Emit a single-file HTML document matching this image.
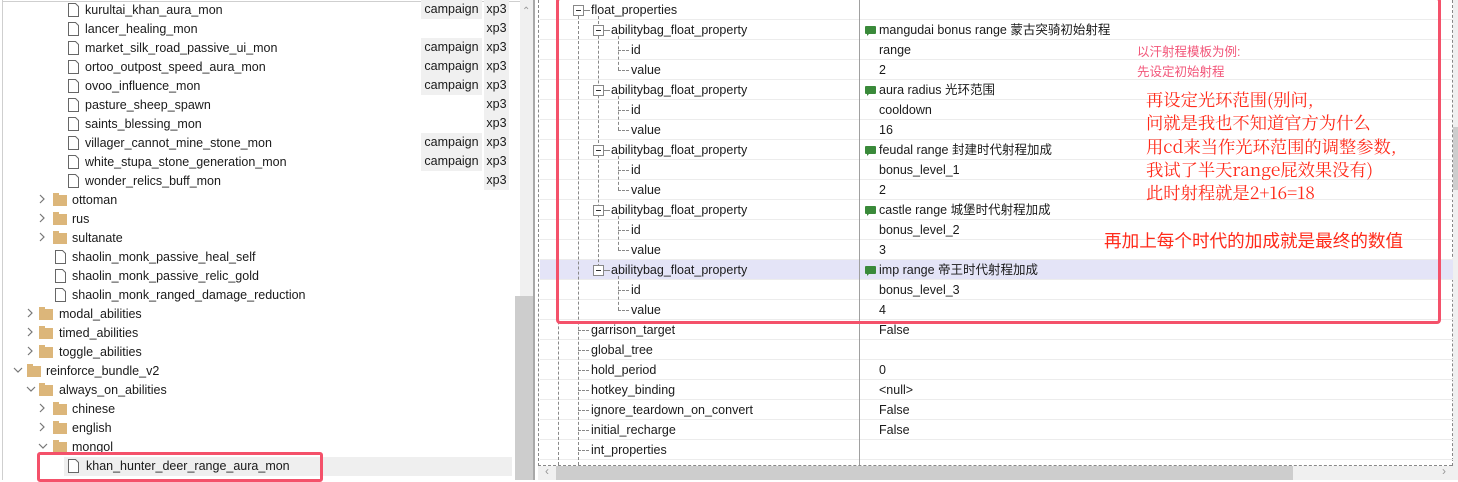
<!DOCTYPE html>
<html><head><meta charset="utf-8"><style>
*{margin:0;padding:0;box-sizing:border-box}
body{width:1458px;height:480px;overflow:hidden;background:#fff;position:relative;font-family:"Liberation Sans","Noto Sans CJK SC",sans-serif;font-size:12.5px;color:#1a1a1a}
.a{position:absolute;white-space:nowrap}
.t{position:absolute;white-space:nowrap;line-height:19px;height:19px;top:1px}
.r{position:absolute;white-space:nowrap;line-height:20px;height:20px}
.tag{position:absolute;background:#f0f0f0;height:19px;line-height:19px;text-align:center}
.fold{position:absolute;width:14px;height:11px;background:#dcb67a}
.fold:before{content:"";position:absolute;left:0;top:-2px;width:6px;height:2px;background:#dcb67a}
.hl{position:absolute;left:540px;width:913px;height:1px;background:#ececec}
.vd{position:absolute;width:0;border-left:1px dashed #888}
.hd{position:absolute;height:0;border-top:1px dashed #888}
.box{position:absolute;width:11px;height:11px;border:1px solid #888;background:#fff}
.box:after{content:"";position:absolute;left:2px;top:4px;width:5px;height:1px;background:#333}
.ic{position:absolute;width:11px;height:8px;background:#3a8a3a;border-radius:1px}
.ic:after{content:"";position:absolute;left:2px;top:7px;border-left:3px solid #3a8a3a;border-bottom:3px solid transparent}
</style></head><body>
<div class="a" style="left:2px;top:0;width:1px;height:480px;background:#cfcfcf"></div>
<div class="a" style="left:2px;top:1px;width:530px;height:1px;background:#cfcfcf"></div>
<div class="a" style="left:520px;top:0;width:13px;height:480px;background:#f0f0f0"></div>
<div class="a" style="left:515px;top:296px;width:18px;height:184px;background:#cdcdcd"></div>
<div class="a" style="left:522px;top:6px;color:#999;font-size:10px">&#8963;</div>
<div class="a" style="left:533px;top:0;width:2px;height:480px;background:#a8a8a8"></div>
<div class="a" style="left:64px;top:457px;width:448px;height:19px;background:#efefef"></div>
<svg class="a" style="left:0;top:0" width="520" height="480">
<g fill="#fff" stroke="#666" stroke-width="1">
<path d="M68.5 3.5h7l3 3v10h-10z"/><path d="M68.5 22.5h7l3 3v10h-10z"/><path d="M68.5 41.5h7l3 3v10h-10z"/><path d="M68.5 60.5h7l3 3v10h-10z"/><path d="M68.5 79.5h7l3 3v10h-10z"/><path d="M68.5 98.5h7l3 3v10h-10z"/><path d="M68.5 117.5h7l3 3v10h-10z"/><path d="M68.5 136.5h7l3 3v10h-10z"/><path d="M68.5 155.5h7l3 3v10h-10z"/><path d="M68.5 174.5h7l3 3v10h-10z"/>
<path d="M55.5 250.5h7l3 3v10h-10z"/><path d="M55.5 269.5h7l3 3v10h-10z"/><path d="M55.5 288.5h7l3 3v10h-10z"/>
<path d="M68.5 459.5h7l3 3v10h-10z"/>
</g>
<g fill="none" stroke="#777" stroke-width="1.2">
<path d="M40 195l4 4-4 4M40 214l4 4-4 4M40 233l4 4-4 4"/>
<path d="M28 309l4 4-4 4M28 328l4 4-4 4M28 347l4 4-4 4"/>
<path d="M14 368l4 4 4-4M27 387l4 4 4-4"/>
<path d="M40 404l4 4-4 4M40 423l4 4-4 4M39 444l4 4 4-4"/>
</g></svg>
<div class="fold" style="left:53px;top:195px"></div><div class="fold" style="left:53px;top:214px"></div><div class="fold" style="left:53px;top:233px"></div>
<div class="fold" style="left:39px;top:309px"></div><div class="fold" style="left:39px;top:328px"></div><div class="fold" style="left:39px;top:347px"></div>
<div class="fold" style="left:27px;top:366px"></div><div class="fold" style="left:39px;top:385px"></div>
<div class="fold" style="left:53px;top:404px"></div><div class="fold" style="left:53px;top:423px"></div><div class="fold" style="left:53px;top:442px"></div>
<div class="t" style="left:85px;top:1px">kurultai_khan_aura_mon</div>
<div class="t" style="left:85px;top:20px">lancer_healing_mon</div>
<div class="t" style="left:85px;top:39px">market_silk_road_passive_ui_mon</div>
<div class="t" style="left:85px;top:58px">ortoo_outpost_speed_aura_mon</div>
<div class="t" style="left:85px;top:77px">ovoo_influence_mon</div>
<div class="t" style="left:85px;top:96px">pasture_sheep_spawn</div>
<div class="t" style="left:85px;top:115px">saints_blessing_mon</div>
<div class="t" style="left:85px;top:134px">villager_cannot_mine_stone_mon</div>
<div class="t" style="left:85px;top:153px">white_stupa_stone_generation_mon</div>
<div class="t" style="left:85px;top:172px">wonder_relics_buff_mon</div>
<div class="tag" style="left:421px;top:0;width:61px">campaign</div><div class="tag" style="left:484px;top:0;width:25px">xp3</div>
<div class="tag" style="left:484px;top:19px;width:25px">xp3</div>
<div class="tag" style="left:421px;top:38px;width:61px">campaign</div><div class="tag" style="left:484px;top:38px;width:25px">xp3</div>
<div class="tag" style="left:421px;top:57px;width:61px">campaign</div><div class="tag" style="left:484px;top:57px;width:25px">xp3</div>
<div class="tag" style="left:421px;top:76px;width:61px">campaign</div><div class="tag" style="left:484px;top:76px;width:25px">xp3</div>
<div class="tag" style="left:484px;top:95px;width:25px">xp3</div>
<div class="tag" style="left:484px;top:114px;width:25px">xp3</div>
<div class="tag" style="left:421px;top:133px;width:61px">campaign</div><div class="tag" style="left:484px;top:133px;width:25px">xp3</div>
<div class="tag" style="left:421px;top:152px;width:61px">campaign</div><div class="tag" style="left:484px;top:152px;width:25px">xp3</div>
<div class="tag" style="left:484px;top:171px;width:25px">xp3</div>
<div class="t" style="left:72px;top:191px">ottoman</div>
<div class="t" style="left:72px;top:210px">rus</div>
<div class="t" style="left:72px;top:229px">sultanate</div>
<div class="t" style="left:72px;top:248px">shaolin_monk_passive_heal_self</div>
<div class="t" style="left:72px;top:267px">shaolin_monk_passive_relic_gold</div>
<div class="t" style="left:72px;top:286px">shaolin_monk_ranged_damage_reduction</div>
<div class="t" style="left:59px;top:305px">modal_abilities</div>
<div class="t" style="left:59px;top:324px">timed_abilities</div>
<div class="t" style="left:59px;top:343px">toggle_abilities</div>
<div class="t" style="left:46px;top:362px">reinforce_bundle_v2</div>
<div class="t" style="left:59px;top:381px">always_on_abilities</div>
<div class="t" style="left:72px;top:400px">chinese</div>
<div class="t" style="left:72px;top:419px">english</div>
<div class="t" style="left:72px;top:438px">mongol</div>
<div class="t" style="left:86px;top:457px">khan_hunter_deer_range_aura_mon</div>
<div class="a" style="left:37px;top:452px;width:286px;height:30px;border:3px solid #f4516a;border-radius:3px"></div>

<div class="a" style="left:538px;top:0;width:0;height:466px;border-left:1px dashed #888"></div>
<div class="a" style="left:538px;top:465px;width:914px;height:0;border-top:1px dashed #888"></div>
<div class="a" style="left:1452px;top:0;width:0;height:466px;border-left:1px dashed #888"></div>
<div class="a" style="left:540px;top:260px;width:913px;height:20px;background:#e4e4f7"></div>
<div class="hl" style="top:19px"></div><div class="hl" style="top:39px"></div><div class="hl" style="top:59px"></div><div class="hl" style="top:79px"></div><div class="hl" style="top:99px"></div><div class="hl" style="top:119px"></div><div class="hl" style="top:139px"></div><div class="hl" style="top:159px"></div><div class="hl" style="top:179px"></div><div class="hl" style="top:199px"></div><div class="hl" style="top:219px"></div><div class="hl" style="top:239px"></div><div class="hl" style="top:259px"></div><div class="hl" style="top:279px"></div><div class="hl" style="top:299px"></div><div class="hl" style="top:319px"></div><div class="hl" style="top:339px"></div><div class="hl" style="top:359px"></div><div class="hl" style="top:379px"></div><div class="hl" style="top:399px"></div><div class="hl" style="top:419px"></div><div class="hl" style="top:439px"></div><div class="hl" style="top:459px"></div>
<div class="a" style="left:859px;top:0;width:1px;height:465px;background:#a0a0a0"></div>
<div class="vd" style="left:558px;top:0;height:465px"></div>
<div class="vd" style="left:578px;top:16px;height:449px"></div>
<div class="vd" style="left:598px;top:16px;height:256px"></div>
<div class="hd" style="left:584px;top:10px;width:6px"></div>
<div class="vd" style="left:618px;top:36px;height:34px"></div>
<div class="vd" style="left:618px;top:96px;height:34px"></div>
<div class="vd" style="left:618px;top:156px;height:34px"></div>
<div class="vd" style="left:618px;top:216px;height:34px"></div>
<div class="vd" style="left:618px;top:276px;height:34px"></div>
<div class="hd" style="left:618px;top:50px;width:11px"></div><div class="hd" style="left:618px;top:70px;width:11px"></div>
<div class="hd" style="left:618px;top:110px;width:11px"></div><div class="hd" style="left:618px;top:130px;width:11px"></div>
<div class="hd" style="left:618px;top:170px;width:11px"></div><div class="hd" style="left:618px;top:190px;width:11px"></div>
<div class="hd" style="left:618px;top:230px;width:11px"></div><div class="hd" style="left:618px;top:250px;width:11px"></div>
<div class="hd" style="left:618px;top:290px;width:11px"></div><div class="hd" style="left:618px;top:310px;width:11px"></div>
<div class="hd" style="left:604px;top:30px;width:6px"></div><div class="hd" style="left:604px;top:90px;width:6px"></div><div class="hd" style="left:604px;top:150px;width:6px"></div><div class="hd" style="left:604px;top:210px;width:6px"></div><div class="hd" style="left:604px;top:270px;width:6px"></div>
<div class="hd" style="left:578px;top:330px;width:11px"></div><div class="hd" style="left:578px;top:350px;width:11px"></div><div class="hd" style="left:578px;top:370px;width:11px"></div><div class="hd" style="left:578px;top:390px;width:11px"></div><div class="hd" style="left:578px;top:410px;width:11px"></div><div class="hd" style="left:578px;top:430px;width:11px"></div><div class="hd" style="left:578px;top:450px;width:11px"></div>
<div class="box" style="left:573px;top:5px"></div>
<div class="box" style="left:593px;top:25px"></div><div class="box" style="left:593px;top:85px"></div><div class="box" style="left:593px;top:145px"></div><div class="box" style="left:593px;top:205px"></div><div class="box" style="left:593px;top:265px"></div>
<div class="r" style="left:591px;top:0">float_properties</div>
<div class="r" style="left:611px;top:20px">abilitybag_float_property</div>
<div class="r" style="left:631px;top:40px">id</div><div class="r" style="left:631px;top:60px">value</div>
<div class="r" style="left:611px;top:80px">abilitybag_float_property</div>
<div class="r" style="left:631px;top:100px">id</div><div class="r" style="left:631px;top:120px">value</div>
<div class="r" style="left:611px;top:140px">abilitybag_float_property</div>
<div class="r" style="left:631px;top:160px">id</div><div class="r" style="left:631px;top:180px">value</div>
<div class="r" style="left:611px;top:200px">abilitybag_float_property</div>
<div class="r" style="left:631px;top:220px">id</div><div class="r" style="left:631px;top:240px">value</div>
<div class="r" style="left:611px;top:260px">abilitybag_float_property</div>
<div class="r" style="left:631px;top:280px">id</div><div class="r" style="left:631px;top:300px">value</div>
<div class="r" style="left:591px;top:320px">garrison_target</div>
<div class="r" style="left:591px;top:340px">global_tree</div>
<div class="r" style="left:591px;top:360px">hold_period</div>
<div class="r" style="left:591px;top:380px">hotkey_binding</div>
<div class="r" style="left:591px;top:400px">ignore_teardown_on_convert</div>
<div class="r" style="left:591px;top:420px">initial_recharge</div>
<div class="r" style="left:591px;top:440px">int_properties</div>
<div class="ic" style="left:865px;top:26px"></div><div class="ic" style="left:865px;top:86px"></div><div class="ic" style="left:865px;top:146px"></div><div class="ic" style="left:865px;top:206px"></div><div class="ic" style="left:865px;top:266px"></div>
<div class="r" style="left:879px;top:20px">mangudai bonus range 蒙古突骑初始射程</div>
<div class="r" style="left:879px;top:40px">range</div><div class="r" style="left:879px;top:60px">2</div>
<div class="r" style="left:879px;top:80px">aura radius 光环范围</div>
<div class="r" style="left:879px;top:100px">cooldown</div><div class="r" style="left:879px;top:120px">16</div>
<div class="r" style="left:879px;top:140px">feudal range 封建时代射程加成</div>
<div class="r" style="left:879px;top:160px">bonus_level_1</div><div class="r" style="left:879px;top:180px">2</div>
<div class="r" style="left:879px;top:200px">castle range 城堡时代射程加成</div>
<div class="r" style="left:879px;top:220px">bonus_level_2</div><div class="r" style="left:879px;top:240px">3</div>
<div class="r" style="left:879px;top:260px">imp range 帝王时代射程加成</div>
<div class="r" style="left:879px;top:280px">bonus_level_3</div><div class="r" style="left:879px;top:300px">4</div>
<div class="r" style="left:879px;top:320px">False</div>
<div class="r" style="left:879px;top:360px">0</div>
<div class="r" style="left:879px;top:380px">&lt;null&gt;</div>
<div class="r" style="left:879px;top:400px">False</div>
<div class="r" style="left:879px;top:420px">False</div>
<div class="a" style="left:1137px;top:42px;color:#f2577a;font-size:12.5px;line-height:20px">以汗射程模板为例:<br>先设定初始射程</div>
<div class="a" style="left:1146px;top:87px;color:#ff2a1a;font-size:17.3px;line-height:23.3px;font-family:'Noto Serif CJK SC','Liberation Serif',serif">再设定光环范围(别问,<br>问就是我也不知道官方为什么<br>用cd来当作光环范围的调整参数,<br>我试了半天range屁效果没有)<br>此时射程就是2+16=18</div>
<div class="a" style="left:1104px;top:230px;color:#ff2a1a;font-size:17.6px;line-height:23px">再加上每个时代的加成就是最终的数值</div>
<div class="a" style="left:556px;top:-3px;width:885px;height:327px;border:3px solid #f4516a;border-radius:4px"></div>
<div class="a" style="left:1453px;top:0;width:5px;height:466px;background:#f0f0f0"></div>
<div class="a" style="left:1453px;top:127px;width:5px;height:63px;background:#cdcdcd"></div>
<div class="a" style="left:538px;top:466px;width:920px;height:14px;background:#f0f0f0"></div>
<div class="a" style="left:556px;top:466px;width:737px;height:14px;background:#cdcdcd"></div>
<div class="a" style="left:545px;top:464px;color:#999;font-size:12px">&#8249;</div>
<div class="a" style="left:1442px;top:464px;color:#999;font-size:12px">&#8250;</div>
</body></html>
